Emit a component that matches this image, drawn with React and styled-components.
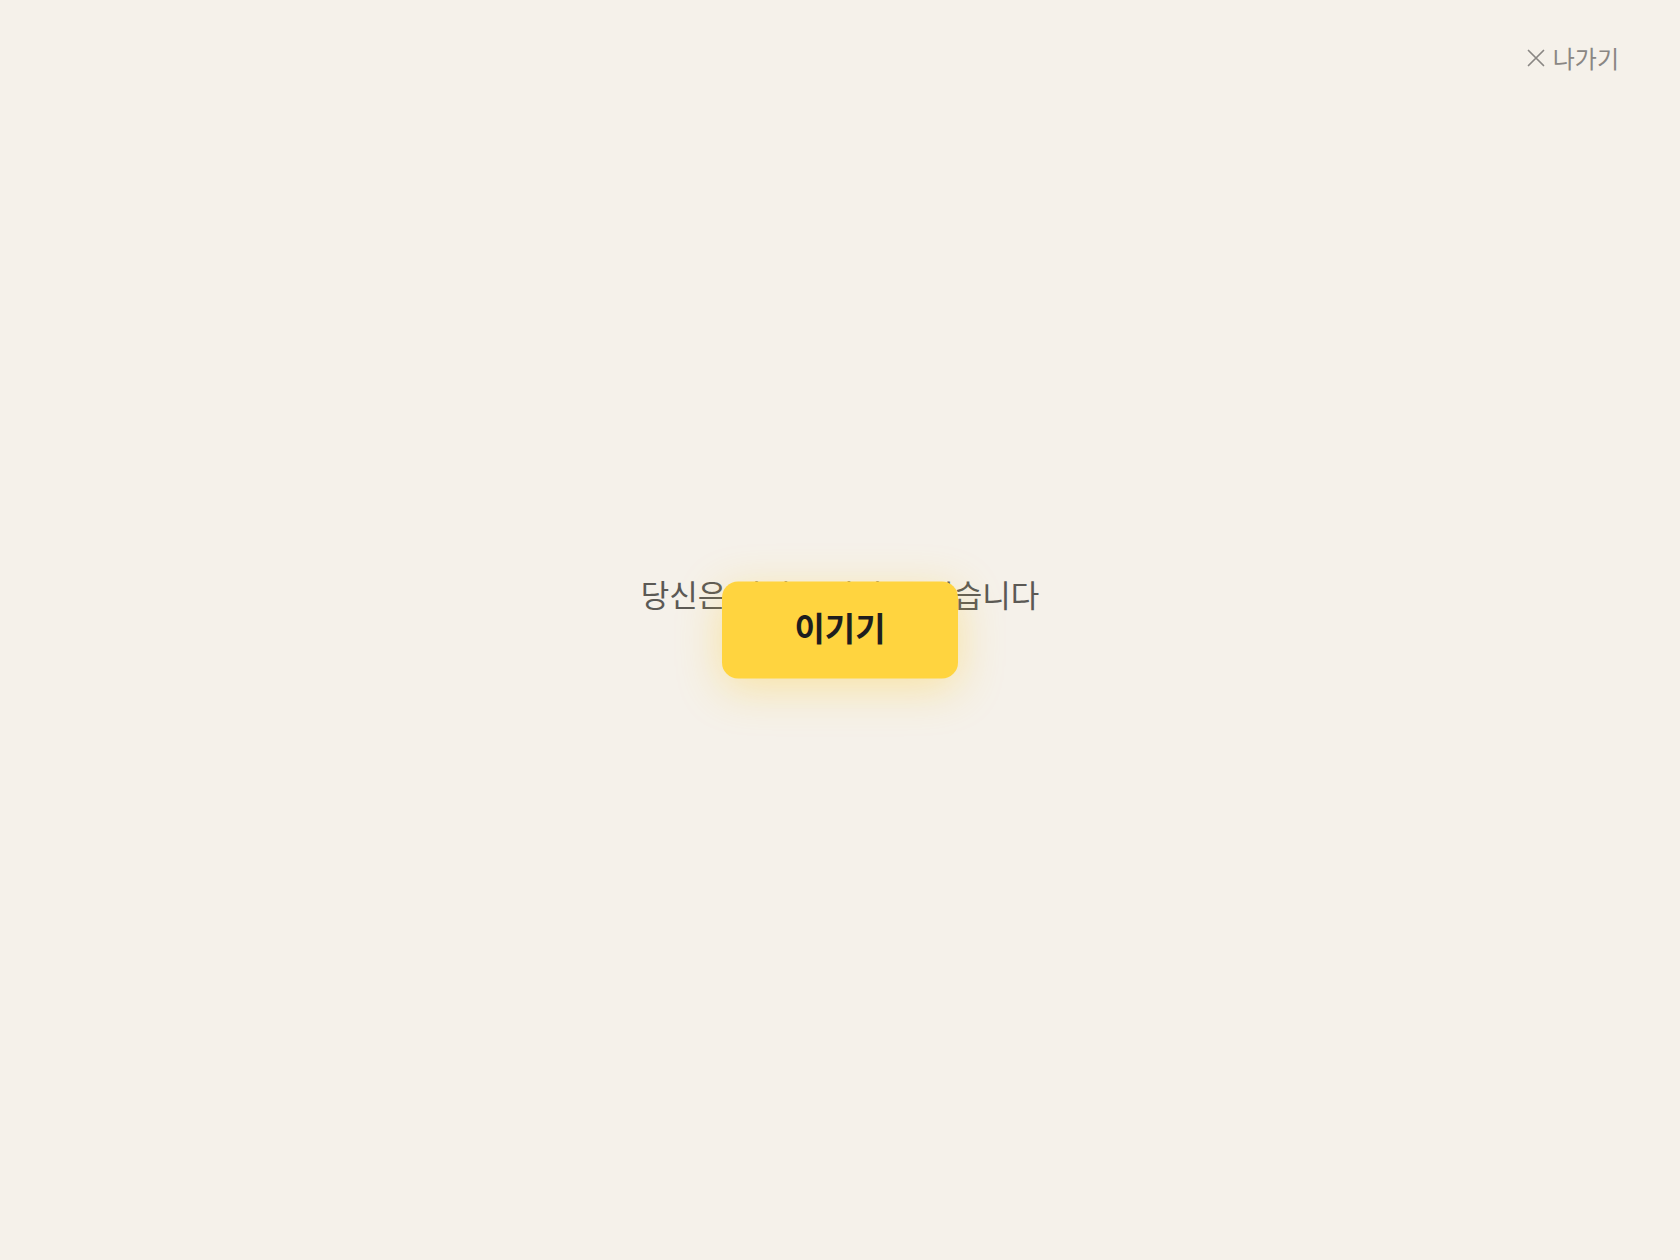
import React from "react";
import styled, { createGlobalStyle } from "styled-components";

const Global = createGlobalStyle`
  html, body {
    margin: 0;
    padding: 0;
    background: #f5f1ea;
    font-family: "Noto Sans CJK KR", "Noto Sans", sans-serif;
  }
  * { box-sizing: border-box; }
`;

const Page = styled.main`
  position: relative;
  width: 100%;
  height: 100vh;
  display: flex;
  flex-direction: column;
  align-items: center;
  justify-content: center;
  background: #f5f1ea;
  overflow: hidden;
`;

const TopBar = styled.header`
  position: absolute;
  top: 0;
  left: 0;
  right: 0;
  display: flex;
  justify-content: flex-end;
  padding: 41px 55px 0 0;
`;

const ExitButton = styled.button`
  display: inline-flex;
  align-items: center;
  gap: 8px;
  background: none;
  border: none;
  padding: 0 6px;
  font-family: inherit;
  font-size: 24px;
  line-height: 34px;
  color: #8a8784;
  cursor: pointer;
`;

const Message = styled.p`
  margin: 0 0 72px;
  font-size: 31px;
  line-height: 44px;
  color: #5b5955;
`;

const RunawayButton = styled.button`
  position: absolute;
  left: 50%;
  top: 50%;
  transform: translate(-50%, -50%);
  width: 236px;
  height: 97px;
  padding: 0 0 8px;
  border: none;
  border-radius: 16px;
  background: #ffd43f;
  color: #1e1e1e;
  font-family: inherit;
  font-size: 33px;
  font-weight: 700;
  box-shadow: 0 10px 44px rgba(255, 205, 50, 0.38);
  cursor: pointer;
`;

function CloseIcon() {
  return (
    <svg width="18" height="18" viewBox="0 0 18 18" fill="none" stroke="#8a8784" strokeWidth="1.7" strokeLinecap="round">
      <path d="M1.5 1.5 L16.5 16.5 M16.5 1.5 L1.5 16.5" />
    </svg>
  );
}

export default function App() {
  return (
    <>
      <Global />
      <Page>
        <TopBar>
          <ExitButton>
            <CloseIcon />
            나가기
          </ExitButton>
        </TopBar>
        <Message>당신은 절대로 이길 수 없습니다</Message>
        <RunawayButton>이기기</RunawayButton>
      </Page>
    </>
  );
}
